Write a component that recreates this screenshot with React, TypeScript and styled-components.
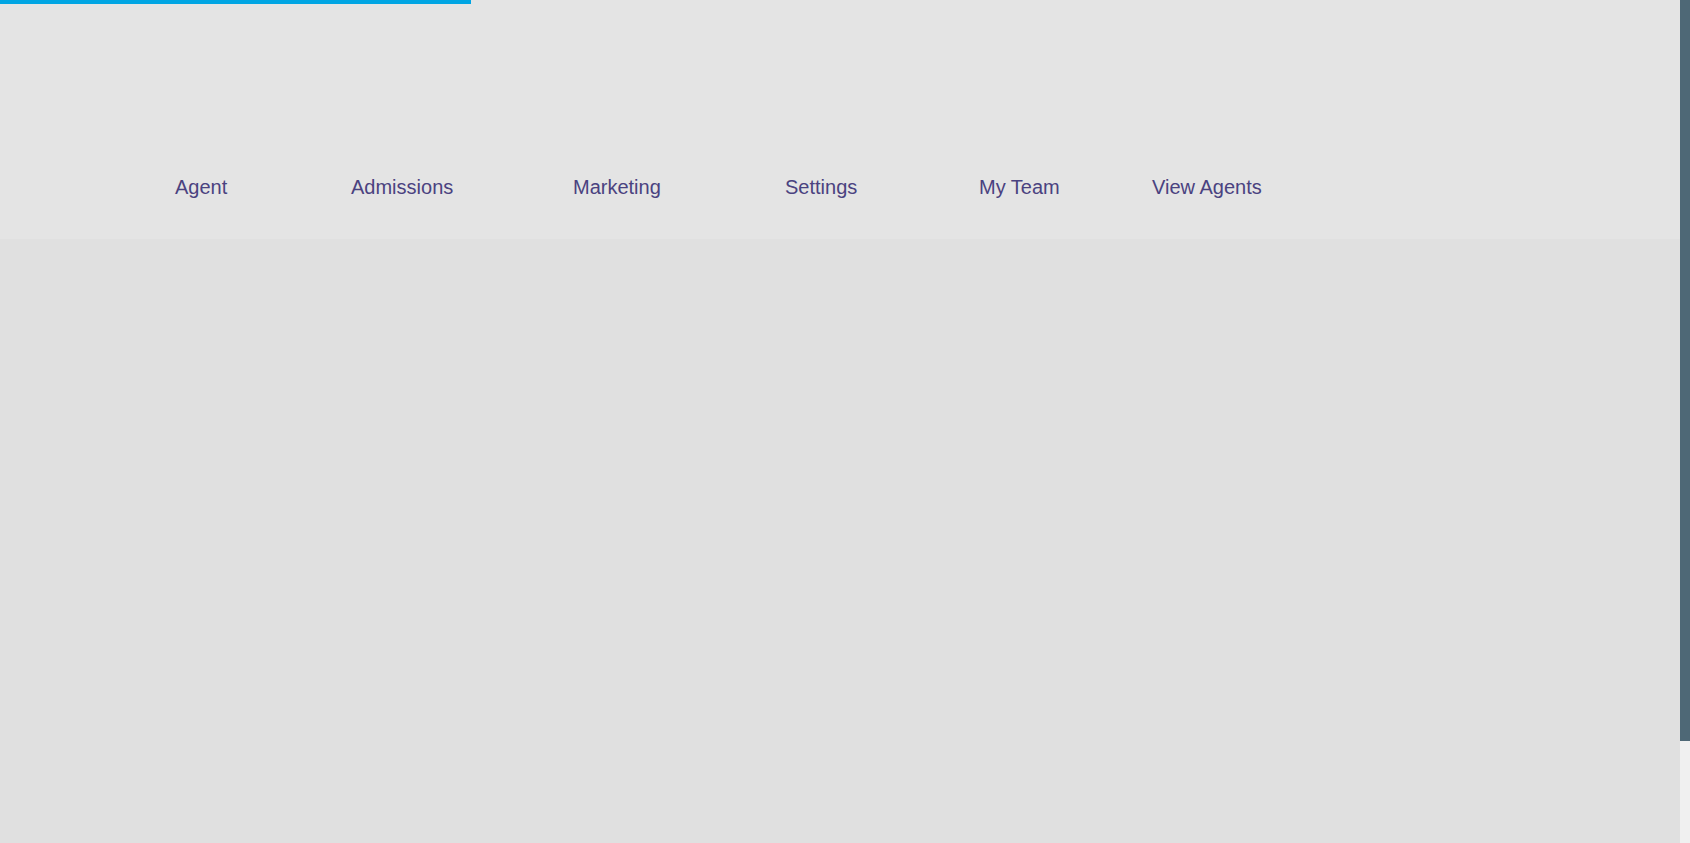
import React from "react";
import styled, { createGlobalStyle } from "styled-components";

const GlobalStyle = createGlobalStyle`
  html, body {
    margin: 0;
    padding: 0;
    height: 100%;
    overflow: hidden;
  }
  body {
    font-family: "Liberation Sans", Arial, sans-serif;
    background: #e0e0e0;
  }
  #root {
    height: 100%;
  }
`;

interface NavEntry {
  title: string;
  href: string;
}

const navItems: NavEntry[] = [
  { title: "Agent", href: "#agent" },
  { title: "Admissions", href: "#admissions" },
  { title: "Marketing", href: "#marketing" },
  { title: "Settings", href: "#settings" },
  { title: "My Team", href: "#team" },
  { title: "View Agents", href: "#agents" },
];

const App: React.FC = () => {
  return (
    <>
      <GlobalStyle />
      <Page>
        <Main>
          <Header>
            <ProgressBar />
            <Nav>
              {navItems.map((item) => (
                <NavLink href={item.href} key={item.href}>
                  {item.title}
                </NavLink>
              ))}
            </Nav>
          </Header>
          <Content />
        </Main>
        <ScrollTrack>
          <ScrollThumb />
        </ScrollTrack>
      </Page>
    </>
  );
};

const Page = styled.div`
  display: flex;
  height: 100vh;
  width: 100%;
`;

const Main = styled.div`
  flex: 1;
  display: flex;
  flex-direction: column;
  min-width: 0;
`;

const Header = styled.header`
  height: 239px;
  background: #e4e4e4;
  display: flex;
  flex-direction: column;
`;

const ProgressBar = styled.div`
  width: 471px;
  height: 4px;
  background: #00a5e3;
`;

const Nav = styled.nav`
  display: grid;
  grid-template-columns: 176px 222px 212px 194px 173px auto;
  padding: 172px 0 0 175px;
`;

const NavLink = styled.a`
  font-size: 20px;
  line-height: 23px;
  color: #4a4280;
  text-decoration: none;
  white-space: nowrap;
  &:hover {
    color: #00a5e3;
  }
`;

const Content = styled.main`
  flex: 1;
  background: #e0e0e0;
`;

const ScrollTrack = styled.div`
  width: 10px;
  background: #f0f0f0;
  display: flex;
  flex-direction: column;
`;

const ScrollThumb = styled.div`
  height: 741px;
  background: #4e6876;
`;

export default App;
